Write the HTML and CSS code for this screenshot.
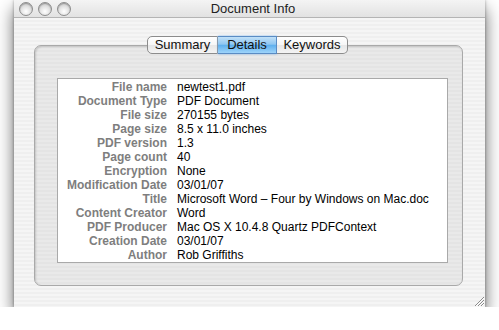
FILE: index.html
```html
<!DOCTYPE html>
<html>
    <head>
        <title>Document Info</title>
        <link rel="stylesheet" href="styles.css">
    </head>
    <body>
        <div class="win">
            <div class="titlebar">
                <div class="lights">
                    <span class="light"></span>
                    <span class="light"></span>
                    <span class="light"></span>
                </div>
                <div class="wintitle">Document Info</div>
            </div>
            <div class="winbody">
                <div class="group">
                    <div class="tabs">
                        <div class="tab tab_first">Summary</div>
                        <div class="tab tab_on">Details</div>
                        <div class="tab tab_last">Keywords</div>
                    </div>
                    <div class="details">
                        <div class="row"><span class="lbl">File name</span><span class="val">newtest1.pdf</span></div>
                        <div class="row"><span class="lbl">Document Type</span><span class="val">PDF Document</span></div>
                        <div class="row"><span class="lbl">File size</span><span class="val">270155 bytes</span></div>
                        <div class="row"><span class="lbl">Page size</span><span class="val">8.5 x 11.0 inches</span></div>
                        <div class="row"><span class="lbl">PDF version</span><span class="val">1.3</span></div>
                        <div class="row"><span class="lbl">Page count</span><span class="val">40</span></div>
                        <div class="row"><span class="lbl">Encryption</span><span class="val">None</span></div>
                        <div class="row"><span class="lbl">Modification Date</span><span class="val">03/01/07</span></div>
                        <div class="row"><span class="lbl">Title</span><span class="val">Microsoft Word – Four by Windows on Mac.doc</span></div>
                        <div class="row"><span class="lbl">Content Creator</span><span class="val">Word</span></div>
                        <div class="row"><span class="lbl">PDF Producer</span><span class="val">Mac OS X 10.4.8 Quartz PDFContext</span></div>
                        <div class="row"><span class="lbl">Creation Date</span><span class="val">03/01/07</span></div>
                        <div class="row"><span class="lbl">Author</span><span class="val">Rob Griffiths</span></div>
                    </div>
                </div>
                <svg class="grip" width="10" height="10" viewBox="0 0 10 10">
                    <path d="M1 10 L10 1 M4 10 L10 4 M7 10 L10 7" stroke="#8a8a8a" stroke-width="1"/>
                    <path d="M2 10 L10 2 M5 10 L10 5 M8 10 L10 8" stroke="#ffffff" stroke-width="1"/>
                </svg>
            </div>
        </div>
    </body>
</html>
```
FILE: styles.css
```css
body{
    margin: 0;
    background: #ffffff;
    font-family: "Liberation Sans", "DejaVu Sans", sans-serif;
}
.win{
    margin-left: 14px;
    width: 471px;
    height: 307px;
    display: flex;
    flex-direction: column;
    box-shadow: 0 9px 16px rgba(0,0,0,0.6), 0 0 3px rgba(0,0,0,0.35);
    background: repeating-linear-gradient(#efefef 0, #efefef 2px, #f5f5f5 2px, #f5f5f5 4px);
}
.titlebar{
    height: 19px;
    border-bottom: 1px solid #b4b4b4;
    display: flex;
    align-items: center;
    position: relative;
    background: linear-gradient(#f4f4f4, #e2e2e2);
}
.lights{
    display: flex;
    gap: 5px;
    padding-left: 5px;
}
.light{
    width: 12px;
    height: 12px;
    border-radius: 50%;
    border: 1px solid #8d8d8d;
    background: radial-gradient(circle at 50% 70%, #ffffff 0, #e4e4e4 45%, #b8b8b8 100%);
    box-shadow: inset 0 1px 1px rgba(0,0,0,0.25);
}
.wintitle{
    flex: 1;
    text-align: center;
    font-size: 13px;
    color: #222;
    margin-right: 50px;
}
.winbody{
    flex: 1;
    padding: 27px 22px 21px 20px;
    display: flex;
    position: relative;
}
.group{
    flex: 1;
    border: 1px solid #a9a9a9;
    border-radius: 7px;
    background: repeating-linear-gradient(#e4e4e4 0, #e4e4e4 2px, #e9e9e9 2px, #e9e9e9 4px);
    box-shadow: inset 1px 1px 2px rgba(0,0,0,0.15);
    position: relative;
    padding: 32px 14px 22px 22px;
    display: flex;
}
.tabs{
    position: absolute;
    top: -10px;
    left: 112px;
    display: flex;
    height: 18px;
}
.tab{
    box-sizing: border-box;
    height: 18px;
    line-height: 16px;
    font-size: 13px;
    text-align: center;
    color: #111;
    border: 1px solid #8c8c8c;
    border-left: none;
    background: linear-gradient(#ffffff 0, #f6f6f6 50%, #e6e6e6 51%, #f4f4f4 100%);
}
.tab_first{
    width: 71px;
    border-left: 1px solid #8c8c8c;
    border-radius: 5px 0 0 5px;
}
.tab_on{
    width: 59px;
    border-color: #5a8cc4;
    background: linear-gradient(#c2e1f8 0, #8fc6f1 45%, #5fb0ee 52%, #9ed4fa 100%);
    box-shadow: 0 0 2px #7fb3ea;
}
.tab_last{
    width: 71px;
    border-radius: 0 5px 5px 0;
}
.details{
    flex: 1;
    background: #ffffff;
    border: 1px solid #a9a9a9;
    font-size: 12px;
    line-height: 14px;
    padding-top: 1px;
}
.row{
    display: flex;
    gap: 10px;
}
.lbl{
    width: 109px;
    text-align: right;
    font-weight: bold;
    color: #7e7e7e;
}
.val{
    color: #000;
}
.grip{
    position: absolute;
    right: 1px;
    bottom: 1px;
}
```
